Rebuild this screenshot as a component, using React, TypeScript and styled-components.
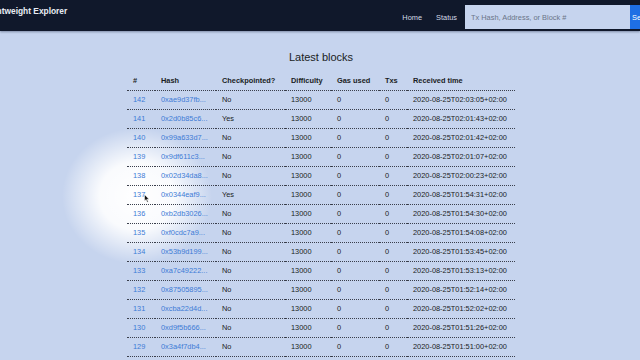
import React from "react"
import styled, { createGlobalStyle } from "styled-components"

const blocks = [
  { n: 142, hash: "0xae9d37fb...", cp: "No", time: "2020-08-25T02:03:05+02:00" },
  { n: 141, hash: "0x2d0b85c6...", cp: "Yes", time: "2020-08-25T02:01:43+02:00" },
  { n: 140, hash: "0x99a633d7...", cp: "No", time: "2020-08-25T02:01:42+02:00" },
  { n: 139, hash: "0x9df611c3...", cp: "No", time: "2020-08-25T02:01:07+02:00" },
  { n: 138, hash: "0x02d34da8...", cp: "No", time: "2020-08-25T02:00:23+02:00" },
  { n: 137, hash: "0x0344eaf9...", cp: "Yes", time: "2020-08-25T01:54:31+02:00" },
  { n: 136, hash: "0xb2db3026...", cp: "No", time: "2020-08-25T01:54:30+02:00" },
  { n: 135, hash: "0xf0cdc7a9...", cp: "No", time: "2020-08-25T01:54:08+02:00" },
  { n: 134, hash: "0x53b9d199...", cp: "No", time: "2020-08-25T01:53:45+02:00" },
  { n: 133, hash: "0xa7c49222...", cp: "No", time: "2020-08-25T01:53:13+02:00" },
  { n: 132, hash: "0x87505895...", cp: "No", time: "2020-08-25T01:52:14+02:00" },
  { n: 131, hash: "0xcba22d4d...", cp: "No", time: "2020-08-25T01:52:02+02:00" },
  { n: 130, hash: "0xd9f5b666...", cp: "No", time: "2020-08-25T01:51:26+02:00" },
  { n: 129, hash: "0x3a4f7db4...", cp: "No", time: "2020-08-25T01:51:00+02:00" },
]

const App = () => {
  return (
    <Page>
      <GlobalStyle />
      <Spotlight />
      <Navbar>
        <Brand>Lightweight Explorer</Brand>
        <NavRight>
          <NavLink>Home</NavLink>
          <NavLink>Status</NavLink>
          <SearchForm>
            <SearchInput placeholder="Tx Hash, Address, or Block #" />
            <SearchButton>Search</SearchButton>
          </SearchForm>
        </NavRight>
      </Navbar>
      <Main>
        <Title>Latest blocks</Title>
        <Table>
          <thead>
            <tr>
              <Th w={28}>#</Th>
              <Th w={61}>Hash</Th>
              <Th w={69}>Checkpointed?</Th>
              <Th w={46}>Difficulty</Th>
              <Th w={48}>Gas used</Th>
              <Th w={28}>Txs</Th>
              <Th w={108}>Received time</Th>
            </tr>
          </thead>
          <tbody>
            {blocks.map((b) => (
              <tr key={b.n}>
                <Td><Link>{b.n}</Link></Td>
                <Td><Link>{b.hash}</Link></Td>
                <Td>{b.cp}</Td>
                <Td>13000</Td>
                <Td>0</Td>
                <Td>0</Td>
                <Td>{b.time}</Td>
              </tr>
            ))}
          </tbody>
        </Table>
      </Main>
      <Cursor viewBox="0 0 12 18" width="6" height="9">
        <path d="M1 1 L1 14 L4 11 L6.5 16.5 L8.5 15.5 L6 10.5 L10 10.5 Z" fill="#111" stroke="#fff" strokeWidth="1" />
      </Cursor>
    </Page>
  )
}

export default App

const GlobalStyle = createGlobalStyle`
  html, body {
    margin: 0;
    padding: 0;
    background: #c6d4ee;
    overflow: hidden;
  }
  body {
    font-family: "Liberation Sans", Arial, sans-serif;
  }
`
const Page = styled.div`
  position: relative;
  width: 640px;
  height: 360px;
  overflow: hidden;
  background: #c6d4ee;
`
const Navbar = styled.div`
  position: relative;
  z-index: 2;
  display: flex;
  align-items: center;
  height: 31px;
  background: #10182b;
  box-shadow: 0 1px 2px rgba(40, 50, 80, 0.45);
  overflow: hidden;
`
const Brand = styled.div`
  margin-left: -16px;
  margin-top: -10px;
  color: #e8ecf4;
  font-weight: bold;
  font-size: 8.4px;
  white-space: nowrap;
`
const NavRight = styled.div`
  display: flex;
  align-items: center;
  margin-left: auto;
  margin-right: -30px;
  padding-top: 3px;
`
const NavLink = styled.span`
  color: #d4dae6;
  font-size: 7.4px;
  margin-right: 14px;
`
const SearchForm = styled.div`
  display: flex;
  align-items: stretch;
  height: 24px;
  margin-left: -6px;
`
const SearchInput = styled.input`
  width: 165px;
  box-sizing: border-box;
  border: none;
  outline: none;
  background: #c6d4ee;
  padding: 0 6px;
  font-family: "Liberation Sans", Arial, sans-serif;
  font-size: 7.4px;
  color: #333;
  &::placeholder {
    color: #6b7588;
  }
`
const SearchButton = styled.button`
  width: 40px;
  border: none;
  background: #1e6fe4;
  color: #fff;
  font-family: "Liberation Sans", Arial, sans-serif;
  font-size: 7.4px;
  padding: 0 0 0 2px;
  text-align: left;
`
const Main = styled.div`
  position: relative;
  z-index: 1;
  display: flex;
  flex-direction: column;
  align-items: center;
  padding-top: 20px;
`
const Title = styled.h1`
  margin: 0 0 9px 0;
  font-size: 11px;
  font-weight: normal;
  color: #1a1d24;
  padding-left: 2px;
`
const Table = styled.table`
  border-collapse: collapse;
  width: 388px;
  margin-left: 2px;
  table-layout: fixed;
  font-size: 7.4px;
  color: #1a1d24;
`
const Th = styled.th<{ w: number }>`
  box-sizing: border-box;
  width: ${(p) => p.w}px;
  text-align: left;
  font-weight: bold;
  padding: 0 0 0 6px;
  height: 18px;
  border-bottom: 1px dotted #3a3f4c;
`
const Td = styled.td`
  padding: 0 0 0 6px;
  height: 18px;
  white-space: nowrap;
  border-bottom: 1px dotted #3a3f4c;
`
const Link = styled.span`
  color: #3d7bd6;
`
const Spotlight = styled.div`
  position: absolute;
  z-index: 0;
  left: 62px;
  top: 128px;
  width: 150px;
  height: 136px;
  border-radius: 50%;
  background: radial-gradient(closest-side, rgba(255, 255, 255, 1) 0%, rgba(255, 255, 255, 0.9) 50%, rgba(255, 255, 255, 0) 100%);
  pointer-events: none;
`
const Cursor = styled.svg`
  position: absolute;
  z-index: 3;
  left: 144px;
  top: 194px;
`
